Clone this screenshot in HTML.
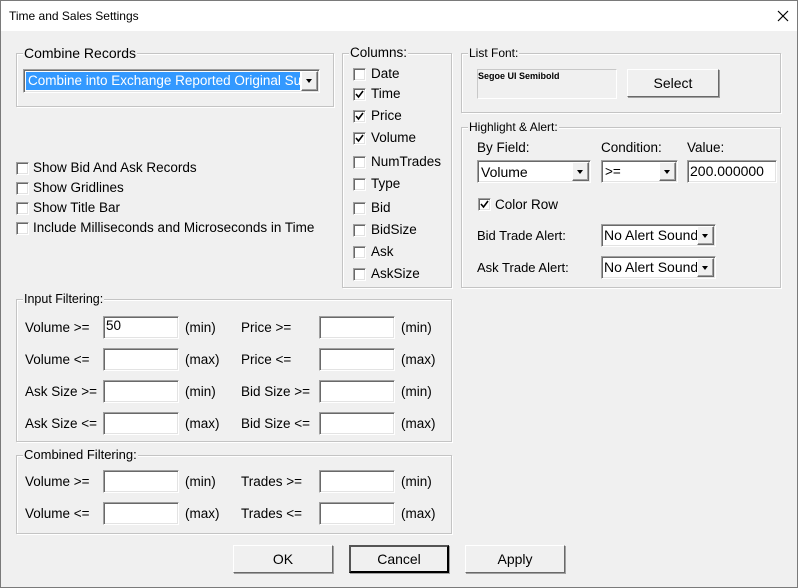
<!DOCTYPE html>
<html><head><meta charset="utf-8"><style>
*{box-sizing:border-box;margin:0;padding:0}
body{width:798px;height:588px;background:#f0f0f0;font-family:"Liberation Sans",Arial,sans-serif;font-size:13.5px;color:#000;position:relative;overflow:hidden}
.win{position:absolute;left:0;top:0;width:798px;height:588px;border:1px solid #7a7a7a}
.title{position:absolute;left:1px;top:1px;width:796px;height:30px;background:#fff;font-size:12px}
.a{position:absolute;white-space:nowrap}
.grp{position:absolute;border:1px solid #c4c4c4;box-shadow:inset 1px 1px 0 #fff,1px 1px 0 #fff}
.gl{position:absolute;background:#f0f0f0;padding:0 1px;line-height:14px;white-space:nowrap}
.ed{position:absolute;background:#fff;border-top:1px solid #a0a0a0;border-left:1px solid #a0a0a0;border-right:1px solid #fff;border-bottom:1px solid #fff;box-shadow:inset 1px 1px 0 #696969,inset -1px -1px 0 #e3e3e3;padding:2px 3px;line-height:16px;white-space:nowrap;overflow:hidden}
.cb{position:absolute;width:13px;height:13px;background:#fff;border-top:1px solid #a0a0a0;border-left:1px solid #a0a0a0;border-right:1px solid #fff;border-bottom:1px solid #fff;box-shadow:inset 1px 1px 0 #696969,inset -1px -1px 0 #e3e3e3}
.cb svg{position:absolute;left:1px;top:1px}
.dd{position:absolute;right:1px;top:1px;width:17px;bottom:1px;background:#f0f0f0;border-top:1px solid #fff;border-left:1px solid #fff;border-right:1px solid #696969;border-bottom:1px solid #696969;box-shadow:inset -1px -1px 0 #a0a0a0}
.dd:after{content:"";position:absolute;left:4px;top:50%;margin-top:-2px;border-left:3.5px solid transparent;border-right:3.5px solid transparent;border-top:4px solid #000}
.btn{position:absolute;background:#f0f0f0;border-top:1px solid #fff;border-left:1px solid #fff;border-right:1px solid #696969;border-bottom:1px solid #696969;box-shadow:1px 1px 0 #a0a0a0;text-align:center;font-size:14px}
</style></head><body>
<div class="win"></div>
<div class="title"><span class="a" style="left:8px;top:8px">Time and Sales Settings</span>
<svg class="a" style="left:776px;top:9px" width="12" height="12"><path d="M1 1L11 11M11 1L1 11" stroke="#000" stroke-width="1.2"/></svg></div>

<div class="grp" style="left:16px;top:53px;width:318px;height:54px"></div>
<div class="gl" style="left:23px;top:46px;font-size:14px">Combine Records</div>
<div class="ed" style="left:23px;top:69px;width:297px;height:24px;padding:0"><div style="position:absolute;left:2px;top:2px;right:19px;bottom:2px;background:#3399ff;color:#fff;font-size:13.5px;line-height:18px;padding-left:2px;overflow:hidden;white-space:nowrap">Combine into Exchange Reported Original Sum</div><div class="dd"></div></div>

<div class="cb" style="left:16px;top:162px"></div><span class="a" style="left:33px;top:160px">Show Bid And Ask Records</span>
<div class="cb" style="left:16px;top:182px"></div><span class="a" style="left:33px;top:180px">Show Gridlines</span>
<div class="cb" style="left:16px;top:202px"></div><span class="a" style="left:33px;top:200px">Show Title Bar</span>
<div class="cb" style="left:16px;top:222px"></div><span class="a" style="left:33px;top:220px">Include Milliseconds and Microseconds in Time</span>

<div class="grp" style="left:342px;top:53px;width:110px;height:235px"></div>
<div class="gl" style="left:349px;top:46px">Columns:</div>
<div class="cb" style="left:353px;top:68px"></div><span class="a" style="left:371px;top:66px">Date</span>
<div class="cb" style="left:353px;top:88px"><svg width="9" height="9"><path d="M1 4L3.5 7L8 1" fill="none" stroke="#000" stroke-width="1.6"/></svg></div><span class="a" style="left:371px;top:86px">Time</span>
<div class="cb" style="left:353px;top:110px"><svg width="9" height="9"><path d="M1 4L3.5 7L8 1" fill="none" stroke="#000" stroke-width="1.6"/></svg></div><span class="a" style="left:371px;top:108px">Price</span>
<div class="cb" style="left:353px;top:132px"><svg width="9" height="9"><path d="M1 4L3.5 7L8 1" fill="none" stroke="#000" stroke-width="1.6"/></svg></div><span class="a" style="left:371px;top:130px">Volume</span>
<div class="cb" style="left:353px;top:156px"></div><span class="a" style="left:371px;top:154px">NumTrades</span>
<div class="cb" style="left:353px;top:178px"></div><span class="a" style="left:371px;top:176px">Type</span>
<div class="cb" style="left:353px;top:202px"></div><span class="a" style="left:371px;top:200px">Bid</span>
<div class="cb" style="left:353px;top:224px"></div><span class="a" style="left:371px;top:222px">BidSize</span>
<div class="cb" style="left:353px;top:246px"></div><span class="a" style="left:371px;top:244px">Ask</span>
<div class="cb" style="left:353px;top:268px"></div><span class="a" style="left:371px;top:266px">AskSize</span>

<div class="grp" style="left:461px;top:53px;width:320px;height:60px"></div>
<div class="gl" style="left:468px;top:46px;font-size:12px">List Font:</div>
<div class="a" style="left:477px;top:69px;width:140px;height:30px;border:1px solid #fff;border-top-color:#c8c8c8;border-left-color:#c8c8c8"></div>
<span class="a" style="left:478px;top:71px;font-size:9px;font-weight:bold">Segoe UI Semibold</span>
<div class="btn" style="left:627px;top:69px;width:92px;height:28px;line-height:26px">Select</div>

<div class="grp" style="left:461px;top:127px;width:320px;height:161px"></div>
<div class="gl" style="left:468px;top:120px;font-size:12px">Highlight &amp; Alert:</div>
<span class="a" style="left:477px;top:140px">By Field:</span>
<span class="a" style="left:601px;top:140px">Condition:</span>
<span class="a" style="left:687px;top:140px">Value:</span>
<div class="ed" style="left:477px;top:160px;width:114px;height:23px;padding-top:3px;font-size:14px">Volume<div class="dd"></div></div>
<div class="ed" style="left:601px;top:160px;width:77px;height:23px;padding-top:3px">&gt;=<div class="dd"></div></div>
<div class="ed" style="left:687px;top:160px;width:90px;height:23px;padding:2px 2px;font-size:14px">200.000000</div>
<div class="cb" style="left:478px;top:198px"><svg width="9" height="9"><path d="M1 4L3.5 7L8 1" fill="none" stroke="#000" stroke-width="1.6"/></svg></div><span class="a" style="left:495px;top:197px">Color Row</span>
<span class="a" style="left:477px;top:228px;font-size:13px">Bid Trade Alert:</span>
<div class="ed" style="left:601px;top:224px;width:115px;height:23px;padding:2px 2px;font-size:14px">No Alert Sound<div class="dd"></div></div>
<span class="a" style="left:477px;top:260px;font-size:13px">Ask Trade Alert:</span>
<div class="ed" style="left:601px;top:256px;width:115px;height:23px;padding:2px 2px;font-size:14px">No Alert Sound<div class="dd"></div></div>

<div class="grp" style="left:16px;top:299px;width:436px;height:143px"></div>
<div class="gl" style="left:23px;top:292px;font-size:12.5px">Input Filtering:</div>
<span class="a" style="left:25px;top:320px">Volume &gt;=</span><div class="ed" style="left:103px;top:316px;width:76px;height:23px;padding:1px 2px">50</div><span class="a" style="left:185px;top:320px">(min)</span>
<span class="a" style="left:241px;top:320px">Price &gt;=</span><div class="ed" style="left:319px;top:316px;width:76px;height:23px"></div><span class="a" style="left:401px;top:320px">(min)</span>
<span class="a" style="left:25px;top:352px">Volume &lt;=</span><div class="ed" style="left:103px;top:348px;width:76px;height:23px"></div><span class="a" style="left:185px;top:352px">(max)</span>
<span class="a" style="left:241px;top:352px">Price &lt;=</span><div class="ed" style="left:319px;top:348px;width:76px;height:23px"></div><span class="a" style="left:401px;top:352px">(max)</span>
<span class="a" style="left:25px;top:384px">Ask Size &gt;=</span><div class="ed" style="left:103px;top:380px;width:76px;height:23px"></div><span class="a" style="left:185px;top:384px">(min)</span>
<span class="a" style="left:241px;top:384px">Bid Size &gt;=</span><div class="ed" style="left:319px;top:380px;width:76px;height:23px"></div><span class="a" style="left:401px;top:384px">(min)</span>
<span class="a" style="left:25px;top:416px">Ask Size &lt;=</span><div class="ed" style="left:103px;top:412px;width:76px;height:23px"></div><span class="a" style="left:185px;top:416px">(max)</span>
<span class="a" style="left:241px;top:416px">Bid Size &lt;=</span><div class="ed" style="left:319px;top:412px;width:76px;height:23px"></div><span class="a" style="left:401px;top:416px">(max)</span>

<div class="grp" style="left:16px;top:455px;width:436px;height:79px"></div>
<div class="gl" style="left:23px;top:448px;font-size:13px">Combined Filtering:</div>
<span class="a" style="left:25px;top:474px">Volume &gt;=</span><div class="ed" style="left:103px;top:470px;width:76px;height:23px"></div><span class="a" style="left:185px;top:474px">(min)</span>
<span class="a" style="left:241px;top:474px">Trades &gt;=</span><div class="ed" style="left:319px;top:470px;width:76px;height:23px"></div><span class="a" style="left:401px;top:474px">(min)</span>
<span class="a" style="left:25px;top:506px">Volume &lt;=</span><div class="ed" style="left:103px;top:502px;width:76px;height:23px"></div><span class="a" style="left:185px;top:506px">(max)</span>
<span class="a" style="left:241px;top:506px">Trades &lt;=</span><div class="ed" style="left:319px;top:502px;width:76px;height:23px"></div><span class="a" style="left:401px;top:506px">(max)</span>

<div class="btn" style="left:233px;top:545px;width:100px;height:28px;line-height:26px">OK</div>
<div class="btn" style="left:349px;top:545px;width:100px;height:28px;line-height:24px;border:2px solid #000;border-top-color:#555;border-left-color:#555">Cancel</div>
<div class="btn" style="left:465px;top:545px;width:100px;height:28px;line-height:26px">Apply</div>
</body></html>
